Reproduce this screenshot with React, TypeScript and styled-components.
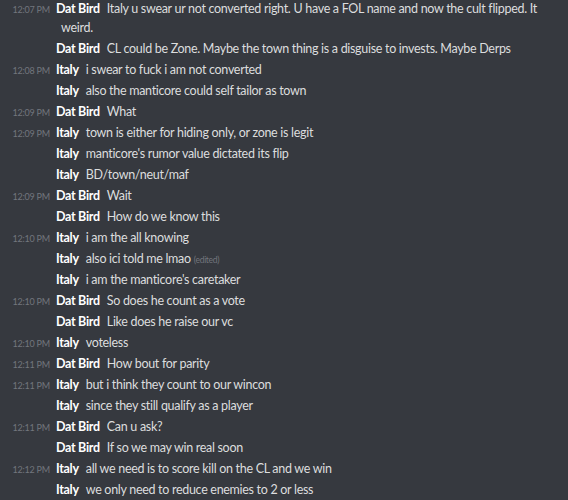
import React from "react";
import styled, { createGlobalStyle } from "styled-components";

const Global = createGlobalStyle`
  html, body { margin: 0; padding: 0; background: #36393f; }
  body { width: 568px; height: 500px; overflow: hidden; }
`;

const Chat = styled.div`
  width: 568px;
  height: 500px;
  background: #36393f;
  font-family: Lato, "Noto Sans", sans-serif;
  font-size: 12.5px;
  letter-spacing: -0.3px;
  color: #dcddde;
  margin-top: -2px;
  padding-right: 24px;
  box-sizing: border-box;
`;

const Row = styled.div`
  padding: 1px 0;
  line-height: 19px;
  padding-left: 61px;
  text-indent: -61px;
`;

const Stamp = styled.span`
  display: inline-block;
  width: 50px;
  margin-right: 6px;
  text-align: right;
  text-indent: 0;
  font-size: 9px;
  line-height: 10px;
  letter-spacing: -0.2px;
  color: #72767d;
  vertical-align: baseline;
`;

const Name = styled.span`
  font-weight: 700;
  color: #ffffff;
  margin-right: 7px;
`;

const Edited = styled.span`
  font-size: 8.5px;
  line-height: 10px;
  color: #72767d;
  margin-left: 3px;
`;

type Msg = { t?: string; n: string; m: string; edited?: boolean };

const msgs: Msg[] = [
  { t: "12:07 PM", n: "Dat Bird", m: "Italy u swear ur not converted right. U have a FOL name and now the cult flipped. It weird." },
  { n: "Dat Bird", m: "CL could be Zone. Maybe the town thing is a disguise to invests. Maybe Derps" },
  { t: "12:08 PM", n: "Italy", m: "i swear to fuck i am not converted" },
  { n: "Italy", m: "also the manticore could self tailor as town" },
  { t: "12:09 PM", n: "Dat Bird", m: "What" },
  { t: "12:09 PM", n: "Italy", m: "town is either for hiding only, or zone is legit" },
  { n: "Italy", m: "manticore's rumor value dictated its flip" },
  { n: "Italy", m: "BD/town/neut/maf" },
  { t: "12:09 PM", n: "Dat Bird", m: "Wait" },
  { n: "Dat Bird", m: "How do we know this" },
  { t: "12:10 PM", n: "Italy", m: "i am the all knowing" },
  { n: "Italy", m: "also ici told me lmao", edited: true },
  { n: "Italy", m: "i am the manticore's caretaker" },
  { t: "12:10 PM", n: "Dat Bird", m: "So does he count as a vote" },
  { n: "Dat Bird", m: "Like does he raise our vc" },
  { t: "12:10 PM", n: "Italy", m: "voteless" },
  { t: "12:11 PM", n: "Dat Bird", m: "How bout for parity" },
  { t: "12:11 PM", n: "Italy", m: "but i think they count to our wincon" },
  { n: "Italy", m: "since they still qualify as a player" },
  { t: "12:11 PM", n: "Dat Bird", m: "Can u ask?" },
  { n: "Dat Bird", m: "If so we may win real soon" },
  { t: "12:12 PM", n: "Italy", m: "all we need is to score kill on the CL and we win" },
  { n: "Italy", m: "we only need to reduce enemies to 2 or less" },
];

export default function App() {
  return (
    <>
      <Global />
      <Chat>
        {msgs.map((x, i) => (
          <Row key={i}>
            <Stamp>{x.t ?? ""}</Stamp>
            <Name>{x.n}</Name>
            {x.m}
            {x.edited && <Edited>(edited)</Edited>}
          </Row>
        ))}
      </Chat>
    </>
  );
}
